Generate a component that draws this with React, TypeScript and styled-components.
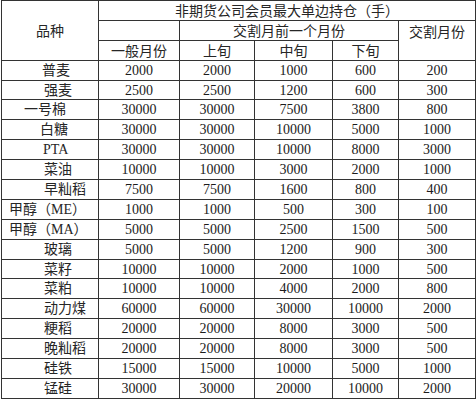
import React from "react";
import styled, { createGlobalStyle } from "styled-components";

const GlobalStyle = createGlobalStyle`
  html, body {
    margin: 0;
    padding: 0;
    background: #ffffff;
  }
  body {
    font-family: "Liberation Serif", "Noto Sans CJK SC", serif;
    color: #1c1c1c;
  }
`;

type Row = {
  name: string;
  indent: number;
  values: number[];
};

const rows: Row[] = [
  { name: "普麦", indent: 40, values: [2000, 2000, 1000, 600, 200] },
  { name: "强麦", indent: 42, values: [2500, 2500, 1200, 600, 300] },
  { name: "一号棉", indent: 22, values: [30000, 30000, 7500, 3800, 800] },
  { name: "白糖", indent: 38, values: [30000, 30000, 10000, 5000, 1000] },
  { name: "PTA", indent: 41, values: [30000, 30000, 10000, 8000, 3000] },
  { name: "菜油", indent: 42, values: [10000, 10000, 3000, 2000, 1000] },
  { name: "早籼稻", indent: 42, values: [7500, 7500, 1600, 800, 400] },
  { name: "甲醇（ME）", indent: 7, values: [1000, 1000, 500, 300, 100] },
  { name: "甲醇（MA）", indent: 7, values: [5000, 5000, 2500, 1500, 500] },
  { name: "玻璃", indent: 42, values: [5000, 5000, 1200, 900, 300] },
  { name: "菜籽", indent: 42, values: [10000, 10000, 2000, 1000, 500] },
  { name: "菜粕", indent: 42, values: [10000, 10000, 4000, 2000, 800] },
  { name: "动力煤", indent: 42, values: [60000, 60000, 30000, 10000, 2000] },
  { name: "粳稻", indent: 42, values: [20000, 20000, 8000, 3000, 500] },
  { name: "晚籼稻", indent: 42, values: [20000, 20000, 8000, 3000, 500] },
  { name: "硅铁", indent: 42, values: [15000, 15000, 10000, 5000, 1000] },
  { name: "锰硅", indent: 42, values: [30000, 30000, 20000, 10000, 2000] },
];

const colWidths = [97, 81, 75, 78, 66, 77];

export default function App() {
  return (
    <>
      <GlobalStyle />
      <Page>
        <PositionTable>
          <colgroup>
            {colWidths.map((w, i) => (
              <col key={i} style={{ width: w }} />
            ))}
          </colgroup>
          <thead>
            <tr>
              <HeadCell rowSpan={3}>品种</HeadCell>
              <HeadCell colSpan={5}>非期货公司会员最大单边持仓（手）</HeadCell>
            </tr>
            <tr>
              <HeadCell />
              <HeadCell colSpan={3}>交割月前一个月份</HeadCell>
              <HeadCell rowSpan={2} top>
                交割月份
              </HeadCell>
            </tr>
            <tr>
              <HeadCell>一般月份</HeadCell>
              <HeadCell>上旬</HeadCell>
              <HeadCell>中旬</HeadCell>
              <HeadCell>下旬</HeadCell>
            </tr>
          </thead>
          <tbody>
            {rows.map((r) => (
              <tr key={r.name}>
                <NameCell indent={r.indent}>{r.name}</NameCell>
                {r.values.map((v, i) => (
                  <NumCell key={i}>{v}</NumCell>
                ))}
              </tr>
            ))}
          </tbody>
        </PositionTable>
      </Page>
    </>
  );
}

const Page = styled.div`
  width: 476px;
  height: 400px;
  padding: 0 0 0 1px;
  box-sizing: border-box;
  overflow: hidden;
`;

const PositionTable = styled.table`
  width: 474px;
  height: 399px;
  table-layout: fixed;
  border-collapse: collapse;

  tr {
    height: 19.9px;
  }
`;

const BaseCell = styled.td`
  border: 1px solid #333333;
  padding: 0;
  line-height: 17px;
  white-space: nowrap;
  overflow: hidden;
`;

const HeadCell = styled(BaseCell).attrs({ as: "th" })<{ top?: boolean }>`
  font-family: "Noto Sans CJK SC", sans-serif;
  font-weight: 400;
  font-size: 14px;
  color: #262626;
  text-align: center;
  vertical-align: ${(p) => (p.top ? "top" : "middle")};
  padding-top: ${(p) => (p.top ? "2px" : "0")};
`;

const NameCell = styled(BaseCell)<{ indent: number }>`
  font-family: "Liberation Serif", "Noto Sans CJK SC", serif;
  font-size: 14px;
  color: #262626;
  text-align: left;
  padding-left: ${(p) => p.indent}px;
`;

const NumCell = styled(BaseCell)`
  font-family: "Liberation Serif", serif;
  font-size: 14px;
  text-align: center;
`;
